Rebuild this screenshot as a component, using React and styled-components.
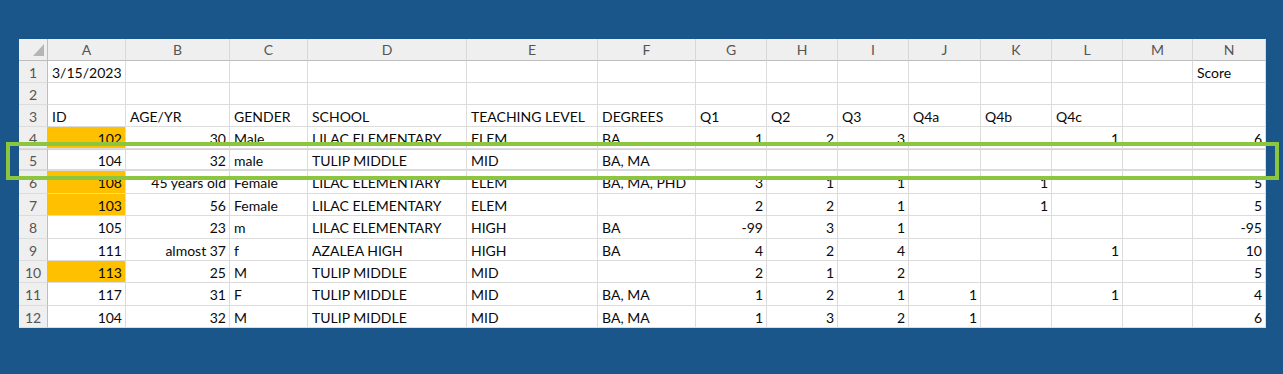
import React from "react";
import styled, { createGlobalStyle } from "styled-components";

const Global = createGlobalStyle`
  html, body { margin: 0; padding: 0; background: #1b568b; }
  body { font-family: Lato, "Liberation Sans", sans-serif; }
`;

const COLS = [29, 78, 104, 78, 159, 131, 98, 71, 71, 71, 72, 71, 71, 70, 73];
const ROW_H = [22, 22, 22, 22, 22, 23, 22, 23, 22, 22, 23, 22];
const LETTERS = ["A","B","C","D","E","F","G","H","I","J","K","L","M","N"];

const Page = styled.div`
  width: 1283px;
  height: 374px;
  padding: 39px 0 0 19px;
  box-sizing: border-box;
  position: relative;
  overflow: hidden;
`;

const Sheet = styled.div`
  display: grid;
  grid-template-columns: ${COLS.map((c) => c + "px").join(" ")};
  grid-template-rows: 22px ${ROW_H.map((h) => h + "px").join(" ")};
  width: 1247px;
  background: #ffffff;
  font-size: 14px;
  color: #0a0a0a;
`;

const Corner = styled.div`
  background: #efefef;
  border-right: 1px solid #bdbdbd;
  border-bottom: 1px solid #bdbdbd;
  display: flex;
  align-items: flex-end;
  justify-content: flex-end;
  padding: 0 3px 4px 0;
`;

const ColHead = styled.div`
  background: #efefef;
  border-right: 1px solid #d8d8d8;
  border-bottom: 1px solid #bdbdbd;
  color: #555;
  display: flex;
  align-items: center;
  justify-content: center;
  line-height: 1;
  padding-top: 1px;
`;

const RowHead = styled.div`
  background: #efefef;
  border-right: 1px solid #bdbdbd;
  border-bottom: 1px solid #dcdcdc;
  color: #555;
  display: flex;
  align-items: center;
  justify-content: center;
  padding-top: 1px;
  ${(p) => p.$pasted && `border-top: 1px solid #d2d2d2; border-bottom: 2px solid #dadada;`}
`;

const Cell = styled.div`
  border-right: 1px solid #dcdcdc;
  border-bottom: 1px solid #dcdcdc;
  background: ${(p) => (p.$hl ? "#ffc000" : "#ffffff")};
  display: flex;
  align-items: center;
  justify-content: ${(p) => (p.$num ? "flex-end" : "flex-start")};
  padding: 2px 3px 0 4px;
  white-space: nowrap;
  overflow: visible;
  line-height: 1;
  ${(p) => p.$pasted && `border-top: 1px solid #d2d2d2; border-bottom: 2px solid #dadada;`}
`;

const Highlight = styled.div`
  position: absolute;
  left: 6px;
  top: 142px;
  width: 1273px;
  height: 38px;
  border: 4px solid #8cc63f;
  box-sizing: border-box;
  pointer-events: none;
`;

const N = (v) => ({ v, num: true });

const DATA = [
  ["3/15/2023", "", "", "", "", "", "", "", "", "", "", "", "", "Score"],
  ["", "", "", "", "", "", "", "", "", "", "", "", "", ""],
  ["ID", "AGE/YR", "GENDER", "SCHOOL", "TEACHING LEVEL", "DEGREES", "Q1", "Q2", "Q3", "Q4a", "Q4b", "Q4c", "", ""],
  [N("102"), N("30"), "Male", "LILAC ELEMENTARY", "ELEM", "BA", N("1"), N("2"), N("3"), "", "", N("1"), "", N("6")],
  [N("104"), N("32"), "male", "TULIP MIDDLE", "MID", "BA, MA", "", "", "", "", "", "", "", ""],
  [N("108"), N("45 years old"), "Female", "LILAC ELEMENTARY", "ELEM", "BA, MA, PHD", N("3"), N("1"), N("1"), "", N("1"), "", "", N("5")],
  [N("103"), N("56"), "Female", "LILAC ELEMENTARY", "ELEM", "", N("2"), N("2"), N("1"), "", N("1"), "", "", N("5")],
  [N("105"), N("23"), "m", "LILAC ELEMENTARY", "HIGH", "BA", N("-99"), N("3"), N("1"), "", "", "", "", N("-95")],
  [N("111"), N("almost 37"), "f", "AZALEA HIGH", "HIGH", "BA", N("4"), N("2"), N("4"), "", "", N("1"), "", N("10")],
  [N("113"), N("25"), "M", "TULIP MIDDLE", "MID", "", N("2"), N("1"), N("2"), "", "", "", "", N("5")],
  [N("117"), N("31"), "F", "TULIP MIDDLE", "MID", "BA, MA", N("1"), N("2"), N("1"), N("1"), "", N("1"), "", N("4")],
  [N("104"), N("32"), "M", "TULIP MIDDLE", "MID", "BA, MA", N("1"), N("3"), N("2"), N("1"), "", "", "", N("6")],
];

const YELLOW_ROWS = new Set([4, 6, 7, 10]);

export default function App() {
  return (
    <>
      <Global />
      <Page>
        <Sheet>
          <Corner>
            <svg width="11" height="12" viewBox="0 0 11 12">
              <polygon points="11,0 11,12 0,12" fill="#b5b5b5" />
            </svg>
          </Corner>
          {LETTERS.map((l) => (
            <ColHead key={l}>{l}</ColHead>
          ))}
          {DATA.map((row, ri) => {
            const rn = ri + 1;
            const pasted = rn === 5;
            return (
              <React.Fragment key={rn}>
                <RowHead $pasted={pasted}>{rn}</RowHead>
                {row.map((c, ci) => {
                  const isObj = typeof c === "object";
                  return (
                    <Cell
                      key={ci}
                      $num={isObj}
                      $pasted={pasted}
                      $hl={ci === 0 && YELLOW_ROWS.has(rn)}
                    >
                      {isObj ? c.v : c}
                    </Cell>
                  );
                })}
              </React.Fragment>
            );
          })}
        </Sheet>
        <Highlight />
      </Page>
    </>
  );
}
